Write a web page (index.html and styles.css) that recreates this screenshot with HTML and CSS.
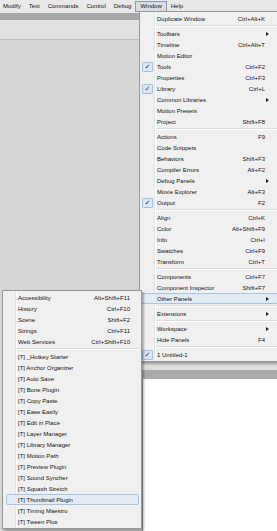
FILE: index.html
```html
<!DOCTYPE html>
<html lang="en">
<head>
    <meta charset="UTF-8">
    <title>Window menu</title>
    <link rel="stylesheet" href="styles.css">
</head>
<body>
    <div class="menubar">
        <span>Modify</span>
        <span>Text</span>
        <span>Commands</span>
        <span>Control</span>
        <span>Debug</span>
        <span class="open">Window</span>
        <span>Help</span>
    </div>
    <div class="strip"></div>
    <div class="toolbar"></div>

    <div class="workspace">
        <div class="side"></div>
        <div class="stage">
            <div class="stage-top"></div>
            <div class="stage-bar"></div>
            <div class="stage-area"></div>
        </div>
    </div>

    <!-- Window menu -->
    <div class="menu menu-window">
        <div class="item"><span>Duplicate Window</span><span class="key">Ctrl+Alt+K</span></div>
        <div class="sep"></div>
        <div class="item sub"><span>Toolbars</span></div>
        <div class="item"><span>Timeline</span><span class="key">Ctrl+Alt+T</span></div>
        <div class="item"><span>Motion Editor</span></div>
        <div class="item checked"><span>Tools</span><span class="key">Ctrl+F2</span></div>
        <div class="item"><span>Properties</span><span class="key">Ctrl+F3</span></div>
        <div class="item checked"><span>Library</span><span class="key">Ctrl+L</span></div>
        <div class="item sub"><span>Common Libraries</span></div>
        <div class="item"><span>Motion Presets</span></div>
        <div class="item"><span>Project</span><span class="key">Shift+F8</span></div>
        <div class="sep"></div>
        <div class="item"><span>Actions</span><span class="key">F9</span></div>
        <div class="item"><span>Code Snippets</span></div>
        <div class="item"><span>Behaviors</span><span class="key">Shift+F3</span></div>
        <div class="item"><span>Compiler Errors</span><span class="key">Alt+F2</span></div>
        <div class="item sub"><span>Debug Panels</span></div>
        <div class="item"><span>Movie Explorer</span><span class="key">Alt+F3</span></div>
        <div class="item checked"><span>Output</span><span class="key">F2</span></div>
        <div class="sep"></div>
        <div class="item"><span>Align</span><span class="key">Ctrl+K</span></div>
        <div class="item"><span>Color</span><span class="key">Alt+Shift+F9</span></div>
        <div class="item"><span>Info</span><span class="key">Ctrl+I</span></div>
        <div class="item"><span>Swatches</span><span class="key">Ctrl+F9</span></div>
        <div class="item"><span>Transform</span><span class="key">Ctrl+T</span></div>
        <div class="sep"></div>
        <div class="item"><span>Components</span><span class="key">Ctrl+F7</span></div>
        <div class="item"><span>Component Inspector</span><span class="key">Shift+F7</span></div>
        <div class="item sub hot"><span>Other Panels</span></div>
        <div class="sep"></div>
        <div class="item sub"><span>Extensions</span></div>
        <div class="sep"></div>
        <div class="item sub"><span>Workspace</span></div>
        <div class="item"><span>Hide Panels</span><span class="key">F4</span></div>
        <div class="sep"></div>
        <div class="item checked"><span>1 Untitled-1</span></div>
    </div>

    <!-- Other Panels submenu -->
    <div class="menu menu-panels">
        <div class="item"><span>Accessibility</span><span class="key">Alt+Shift+F11</span></div>
        <div class="item"><span>History</span><span class="key">Ctrl+F10</span></div>
        <div class="item"><span>Scene</span><span class="key">Shift+F2</span></div>
        <div class="item"><span>Strings</span><span class="key">Ctrl+F11</span></div>
        <div class="item"><span>Web Services</span><span class="key">Ctrl+Shift+F10</span></div>
        <div class="sep"></div>
        <div class="item"><span>[T] _Hotkey Starter</span></div>
        <div class="item"><span>[T] Anchor Organizer</span></div>
        <div class="item"><span>[T] Auto Save</span></div>
        <div class="item"><span>[T] Bone Plugin</span></div>
        <div class="item"><span>[T] Copy Paste</span></div>
        <div class="item"><span>[T] Ease Easily</span></div>
        <div class="item"><span>[T] Edit in Place</span></div>
        <div class="item"><span>[T] Layer Manager</span></div>
        <div class="item"><span>[T] Library Manager</span></div>
        <div class="item"><span>[T] Motion Path</span></div>
        <div class="item"><span>[T] Preview Plugin</span></div>
        <div class="item"><span>[T] Sound Syncher</span></div>
        <div class="item"><span>[T] Squash Stretch</span></div>
        <div class="item hot"><span>[T] Thumbnail Plugin</span></div>
        <div class="item"><span>[T] Timing Maestro</span></div>
        <div class="item"><span>[T] Tween Plus</span></div>
    </div>
</body>
</html>
```

FILE: styles.css
```css
body {
    margin: 0;
    width: 277px;
    height: 531px;
    overflow: hidden;
    position: relative;
    background-color: #d6d6d6;
    font-family: "Liberation Sans", Arial, sans-serif;
    font-size: 6px;
    color: #111;
}
.menubar {
    display: flex;
    align-items: center;
    height: 13px;
    padding-left: 0;
    background-color: #e9e9e9;
}
.menubar span {
    padding: 0 4px;
    line-height: 9px;
}
.menubar span:first-child {
    padding-left: 3px;
}
.menubar .open {
    padding: 0 4px;
    border: 1px solid #8e9aa8;
    background-color: #d9dee5;
}
.strip {
    height: 7px;
    background-color: #a7a7a7;
}
.toolbar {
    height: 19px;
    background-color: #e1e1e1;
    border-bottom: 1px solid #bcbcbc;
}
.workspace {
    display: flex;
    height: 491px;
}
.side {
    width: 142px;
}
.stage {
    flex: 1;
    display: flex;
    flex-direction: column;
}
.stage-top {
    height: 330px;
    background-color: #dedede;
}
.stage-bar {
    height: 9px;
    background-color: #a9a9a9;
}
.stage-area {
    flex: 1;
    background-color: #fff;
    border-left: 1px solid #a0a0a0;
}
.menu {
    position: absolute;
    padding: 1px 0;
    border: 1px solid #979797;
    background-color: #f0f0f0;
    box-shadow: 2px 2px 2px rgba(0, 0, 0, 0.3);
}
.menu-window {
    left: 139px;
    top: 11px;
    width: 139px;
    background-image: linear-gradient(to right, transparent 14px, #e2e3e3 14px, #e2e3e3 15px, #fff 15px, #fff 16px, transparent 16px);
}
.menu-panels {
    left: 2px;
    top: 290px;
    width: 138px;
    background-image: linear-gradient(to right, transparent 12px, #e2e3e3 12px, #e2e3e3 13px, #fff 13px, #fff 14px, transparent 14px);
}
.item {
    position: relative;
    display: flex;
    align-items: center;
    height: 11px;
    margin: 0 1px;
    padding: 0 13px 0 16px;
    white-space: nowrap;
}
.menu-panels .item {
    padding: 0 10px 0 14px;
}
.item .key {
    margin-left: auto;
}
.item.hot {
    background-color: #e3ebf5;
    box-shadow: inset 0 0 0 1px #a9c3de;
    border-radius: 2px;
}
.menu-panels .item.hot {
    margin: 0 2px 0 3px;
    padding-left: 12px;
}
.item.sub::after {
    content: "";
    position: absolute;
    right: 9px;
    top: 3.5px;
    border-left: 3px solid #222;
    border-top: 2px solid transparent;
    border-bottom: 2px solid transparent;
}
.item.checked::before {
    content: "\2713";
    position: absolute;
    left: 1px;
    top: 0.5px;
    width: 11px;
    height: 10px;
    box-sizing: border-box;
    border: 1px solid #a9c3de;
    border-radius: 1px;
    background-color: #dde8f4;
    color: #1b2a78;
    font-family: "DejaVu Sans", sans-serif;
    font-size: 7px;
    line-height: 8px;
    text-align: center;
}
.sep {
    height: 1px;
    margin: 1px 2px 1px 16px;
    background-color: #dcdcdc;
    border-bottom: 1px solid #fff;
}
.menu-panels .sep {
    margin-left: 14px;
}
```
